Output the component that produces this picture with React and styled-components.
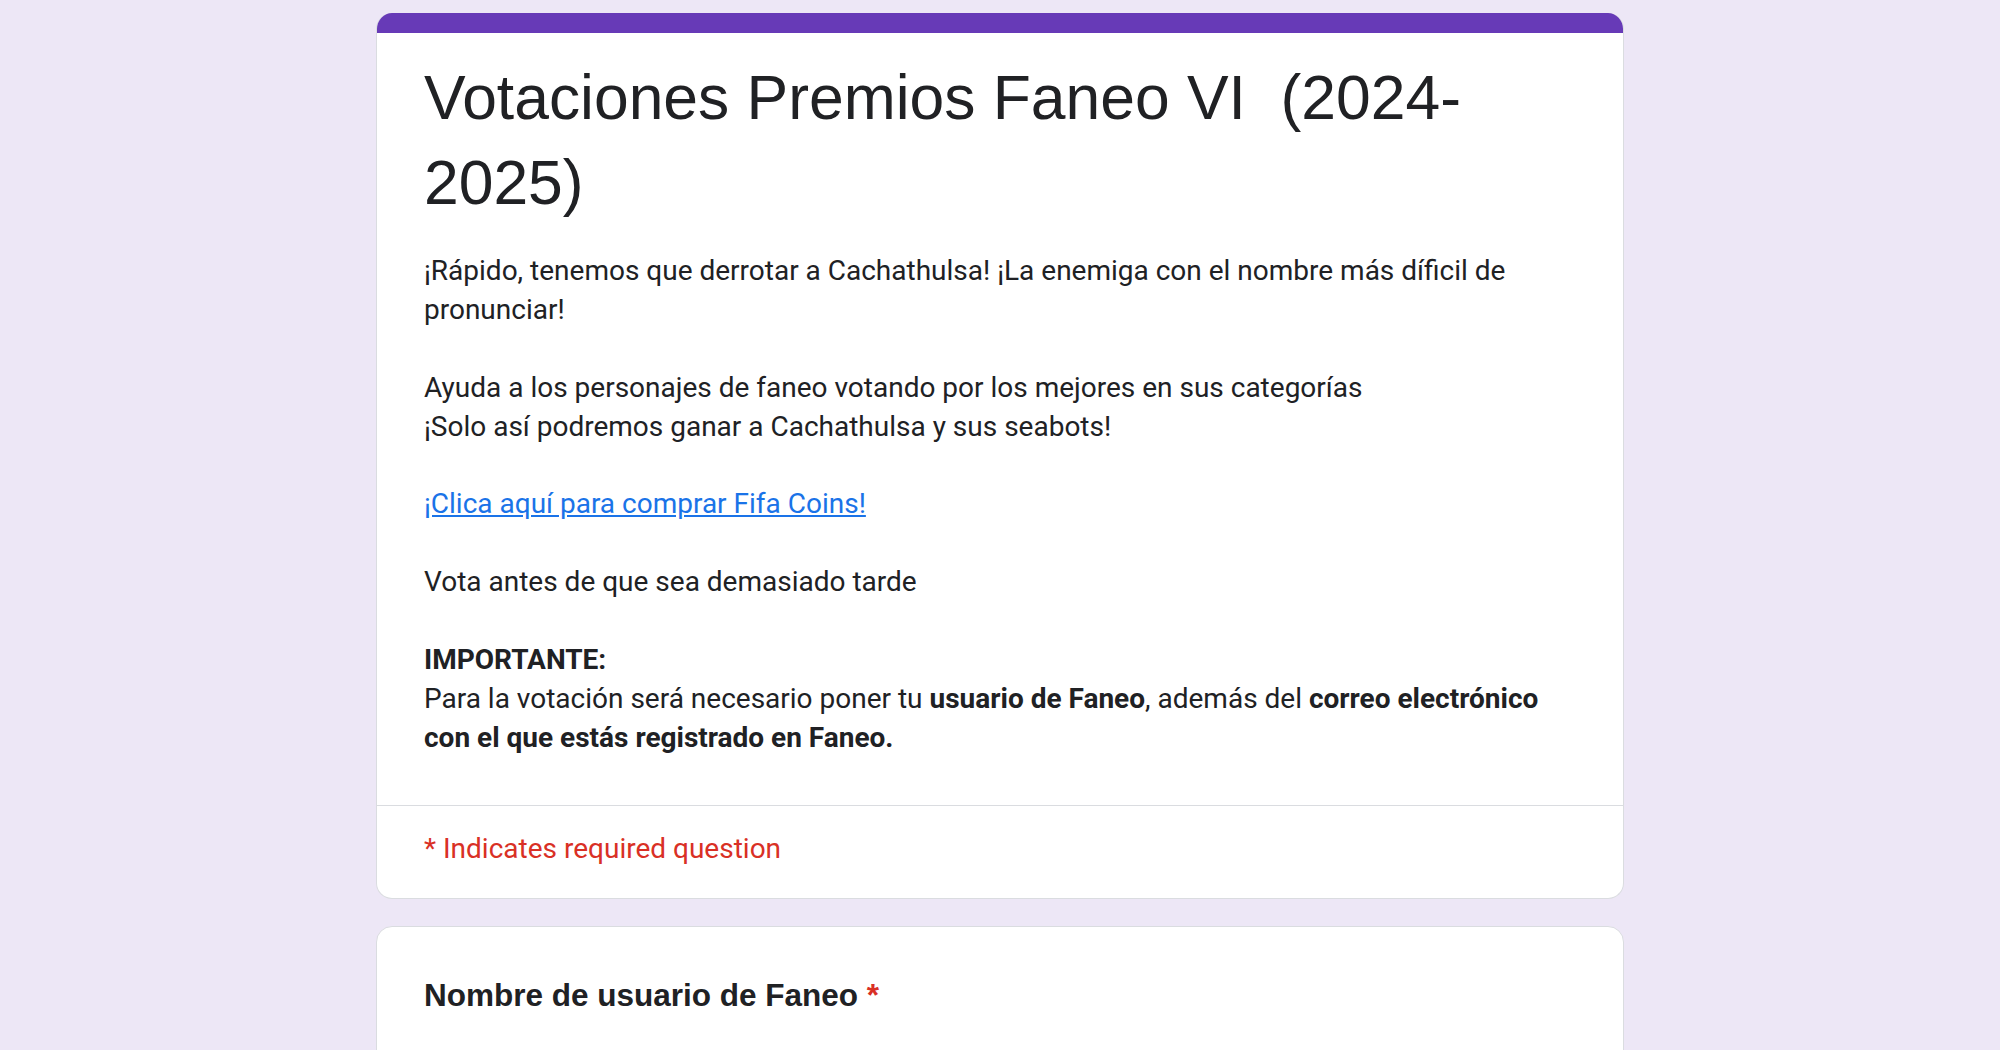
import React from 'react';
import styled, { createGlobalStyle } from 'styled-components';

const GlobalStyle = createGlobalStyle`
  html, body {
    margin: 0;
    padding: 0;
    background: #ede7f6;
  }
`;

const Page = styled.div`
  display: flex;
  flex-direction: column;
  align-items: center;
  gap: 27px;
  padding: 13px 0 60px;
  min-height: 100vh;
  box-sizing: border-box;
`;

const Card = styled.div`
  width: 1248px;
  box-sizing: border-box;
  background: #fff;
  border: 1px solid #dadce0;
  border-radius: 16px;
  overflow: hidden;
`;

const HeaderCard = styled(Card)`
  border-top: none;
  &::before {
    content: '';
    display: block;
    height: 20px;
    background: #673ab7;
    margin: 0 -1px;
  }
`;

const HeaderBody = styled.div`
  padding: 22px 47px 47px;
  border-bottom: 1px solid #dadce0;
`;

const Title = styled.div`
  font-family: 'Liberation Sans', Arial, sans-serif;
  font-size: 62.4px;
  line-height: 85px;
  color: #202124;
  white-space: pre-wrap;
`;

const Description = styled.div`
  margin-top: 27px;
  font-family: Roboto, 'Noto Sans', sans-serif;
  font-size: 28px;
  line-height: 38.9px;
  color: #202124;
`;

const Bold = styled.b`
  font-weight: 700;
`;

const Link = styled.a`
  color: #1a73e8;
  text-decoration: underline;
`;

const Required = styled.div`
  padding: 23px 47px 30px;
  font-family: Roboto, 'Noto Sans', sans-serif;
  font-size: 28px;
  line-height: 39px;
  color: #d93025;
`;

const QuestionCard = styled(Card)`
  padding: 46px 47px 60px;
`;

const QuestionTitle = styled.div`
  font-family: 'Liberation Sans', Arial, sans-serif;
  font-size: 31.5px;
  font-weight: 700;
  line-height: 44px;
  color: #202124;
`;

const Star = styled.span`
  color: #d93025;
`;

const AnswerInput = styled.input`
  margin-top: 60px;
  width: 50%;
  border: none;
  border-bottom: 2px solid #dadce0;
  padding: 8px 0;
  font-family: Roboto, sans-serif;
  font-size: 28px;
  color: #202124;
  outline: none;
  &::placeholder {
    color: #70757a;
  }
`;

export default function App() {
  return (
    <>
      <GlobalStyle />
      <Page>
        <HeaderCard>
          <HeaderBody>
            <Title>
              Votaciones Premios Faneo VI  (2024-<wbr />2025)
            </Title>
            <Description>
              ¡Rápido, tenemos que derrotar a Cachathulsa! ¡La enemiga con el nombre más díficil de
              <br />
              pronunciar!
              <br />
              <br />
              Ayuda a los personajes de faneo votando por los mejores en sus categorías
              <br />
              ¡Solo así podremos ganar a Cachathulsa y sus seabots!
              <br />
              <br />
              <Link href="#">¡Clica aquí para comprar Fifa Coins!</Link>
              <br />
              <br />
              Vota antes de que sea demasiado tarde
              <br />
              <br />
              <Bold>IMPORTANTE:</Bold>
              <br />
              Para la votación será necesario poner tu <Bold>usuario de Faneo</Bold>, además del{' '}
              <Bold>correo electrónico</Bold>
              <br />
              <Bold>con el que estás registrado en Faneo.</Bold>
            </Description>
          </HeaderBody>
          <Required>* Indicates required question</Required>
        </HeaderCard>
        <QuestionCard>
          <QuestionTitle>
            Nombre de usuario de Faneo <Star>*</Star>
          </QuestionTitle>
          <AnswerInput placeholder="Your answer" />
        </QuestionCard>
      </Page>
    </>
  );
}
